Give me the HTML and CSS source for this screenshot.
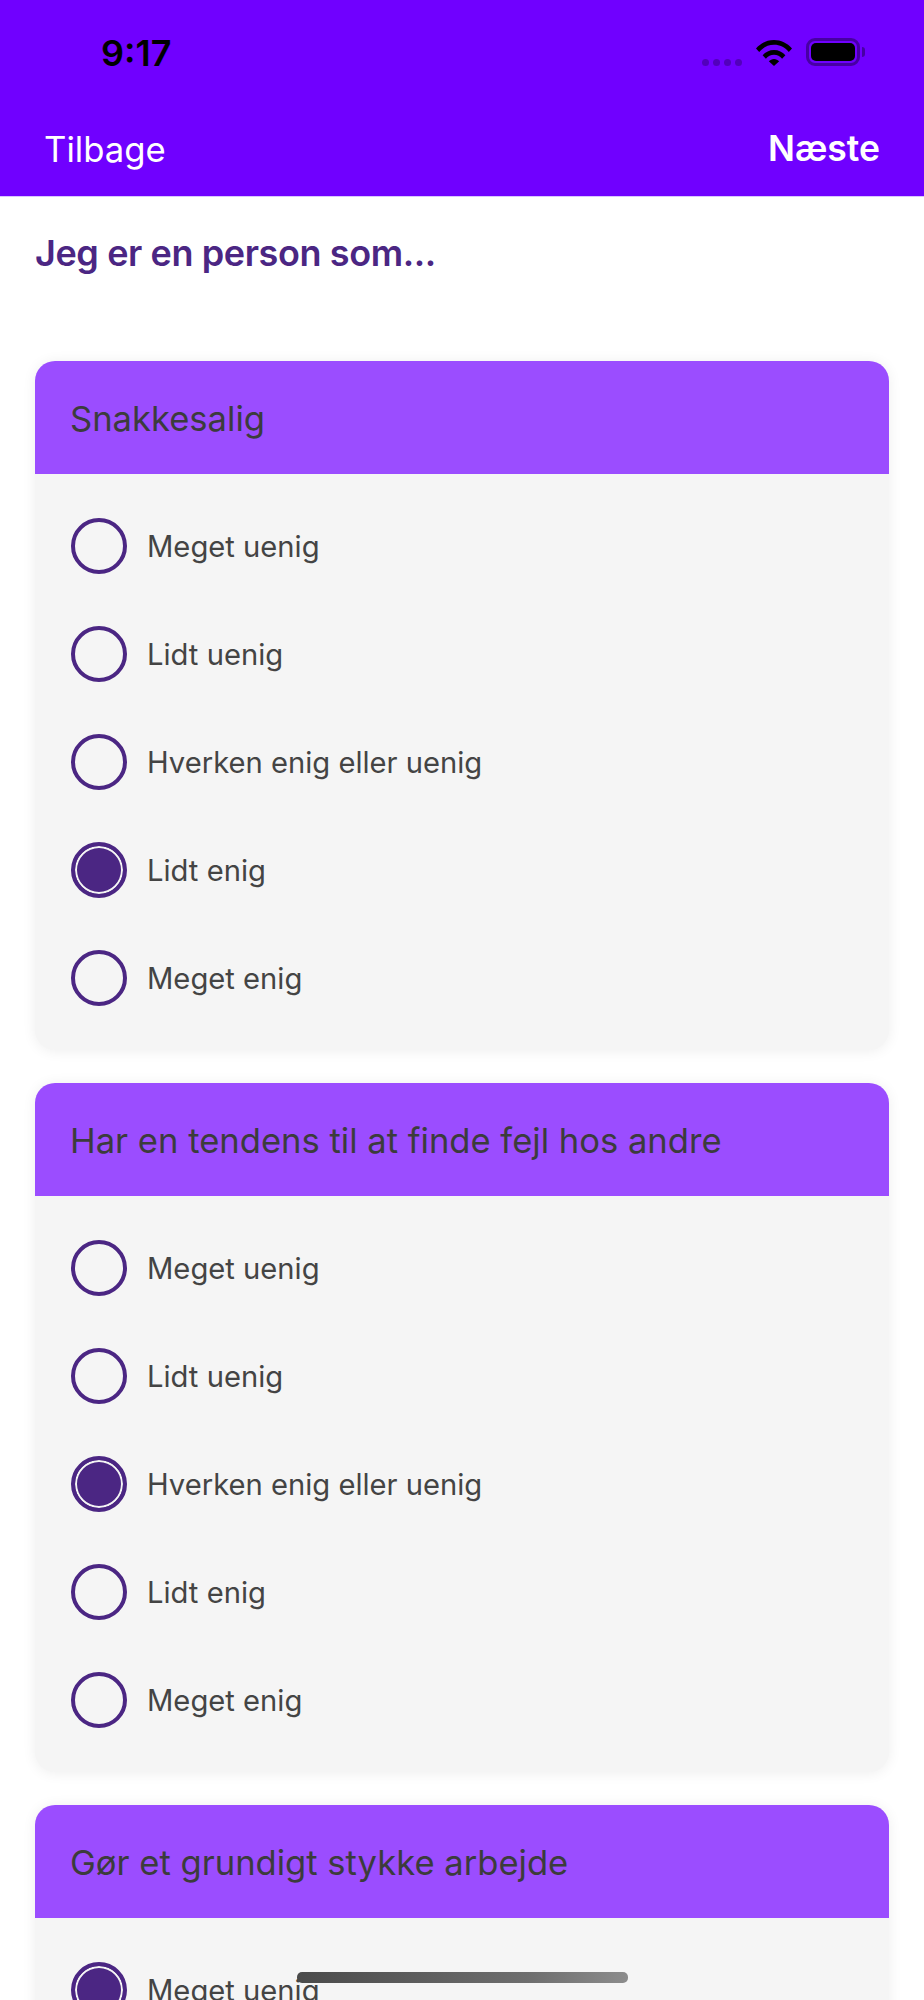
FILE: index.html
```html
<!DOCTYPE html>
<html lang="da">
<head>
	<title>Jeg er en person som...</title>
	<meta charset="utf-8" />
	<meta name="viewport" content="width=device-width, initial-scale=1.0" />
	<link rel="stylesheet" href="styles.css">
</head>
<body>
<div class="screen">
	<header class="topbar">
		<div class="statusbar">
			<span class="time">9:17</span>
			<div class="status-icons">
				<div class="signal"><i></i><i></i><i></i><i></i></div>
				<svg class="wifi" width="36" height="27" viewBox="0 0 36 27">
					<path d="M0 9.5C4.8 4 11 1 18 1s13.200 3 18 8.500l-3.200 3.400C28.800 8.300 23.800 5.800 18 5.800S7.200 8.300 3.200 12.900z" fill="#000"/>
					<path d="M6.600 16.300C9.500 13 13.500 11 18 11s8.500 2 11.400 5.300l-3.300 3.400C24 17.300 21.200 15.800 18 15.800s-6 1.500-8.100 3.900z" fill="#000"/>
					<path d="M12.800 22.300c1.300-1.500 3.100-2.400 5.200-2.400s3.900.9 5.200 2.400L18 27z" fill="#000"/>
				</svg>
				<div class="battery"><div class="battery-level"></div></div>
				<div class="battery-nub"></div>
			</div>
		</div>
		<nav class="navbar">
			<a class="nav-back">Tilbage</a>
			<a class="nav-next">Næste</a>
		</nav>
	</header>

	<section class="content">
		<h1 class="intro">Jeg er en person som...</h1>

		<div class="card">
			<h2 class="card-title">Snakkesalig</h2>
			<ul class="options">
				<li><span class="radio"></span>Meget uenig</li>
				<li><span class="radio"></span>Lidt uenig</li>
				<li><span class="radio"></span>Hverken enig eller uenig</li>
				<li><span class="radio checked"></span>Lidt enig</li>
				<li><span class="radio"></span>Meget enig</li>
			</ul>
		</div>

		<div class="card">
			<h2 class="card-title">Har en tendens til at finde fejl hos andre</h2>
			<ul class="options">
				<li><span class="radio"></span>Meget uenig</li>
				<li><span class="radio"></span>Lidt uenig</li>
				<li><span class="radio checked"></span>Hverken enig eller uenig</li>
				<li><span class="radio"></span>Lidt enig</li>
				<li><span class="radio"></span>Meget enig</li>
			</ul>
		</div>

		<div class="card">
			<h2 class="card-title">Gør et grundigt stykke arbejde</h2>
			<ul class="options">
				<li><span class="radio checked"></span>Meget uenig</li>
				<li><span class="radio"></span>Lidt uenig</li>
				<li><span class="radio"></span>Hverken enig eller uenig</li>
				<li><span class="radio"></span>Lidt enig</li>
				<li><span class="radio"></span>Meget enig</li>
			</ul>
		</div>
	</section>

	<div class="home-indicator"></div>
</div>
</body>
</html>
```

FILE: styles.css
```css
html, body {
	margin: 0;
	padding: 0;
	background: #fff;
}
body {
	font-family: Inter, "Liberation Sans", sans-serif;
}
.screen {
	position: relative;
	width: 924px;
	height: 2000px;
	overflow: hidden;
}

/* top bar */
.topbar {
	height: 197px;
	box-sizing: border-box;
	background-color: #7000ff;
	border-bottom: 1px solid #d9c4ff;
}
.statusbar {
	display: flex;
	justify-content: space-between;
	height: 104px;
	box-sizing: border-box;
	padding: 32px 59px 0 101px;
}
.time {
	font-size: 36px;
	line-height: 42px;
	font-weight: 600;
	color: #000;
}
.status-icons {
	display: flex;
	align-items: flex-start;
	margin-top: 6px;
}
.signal {
	display: flex;
	gap: 4px;
	margin: 21px 14px 0 0;
}
.signal i {
	width: 7px;
	height: 7px;
	border-radius: 50%;
	background-color: #5200bc;
}
.wifi {
	margin: 1px 14px 0 0;
}
.battery {
	width: 54px;
	height: 28px;
	box-sizing: border-box;
	padding: 2px;
	border: 3px solid #4700a3;
	border-radius: 9px;
}
.battery-level {
	height: 100%;
	border-radius: 5px;
	background-color: #000;
}
.battery-nub {
	width: 3px;
	height: 10px;
	margin: 9px 0 0 2px;
	border-radius: 0 3px 3px 0;
	background-color: #4700a3;
}
.navbar {
	display: flex;
	justify-content: space-between;
	padding: 24px 44px 0 44px;
	font-size: 34.7px;
	line-height: 42px;
	color: #fff;
}
.nav-next {
	font-size: 35.500px;
	font-weight: 600;
}

/* questions */
.content {
	padding: 0 35px;
}
.intro {
	margin: 0;
	padding: 35px 0 87px;
	font-size: 36px;
	line-height: 42px;
	font-weight: 600;
	letter-spacing: -0.4px;
	color: #4b2683;
}
.card {
	height: 689px;
	margin-bottom: 33px;
	border-radius: 20px;
	overflow: hidden;
	background-color: #f5f5f5;
	box-shadow: 0 1px 14px rgba(0, 0, 0, 0.07);
}
.card-title {
	margin: 0;
	height: 113px;
	box-sizing: border-box;
	padding: 36px 35px 0;
	font-size: 34.6px;
	line-height: 42px;
	font-weight: 400;
	color: #3c3c3c;
	background-color: #9b4dff;
}
.options {
	list-style: none;
	margin: 0;
	padding: 18px 0 0 36px;
}
.options li {
	display: flex;
	align-items: center;
	gap: 20px;
	height: 108px;
	font-size: 29.2px;
	color: #444;
}
.radio {
	width: 56px;
	height: 56px;
	box-sizing: border-box;
	border: 4px solid #4b2683;
	border-radius: 50%;
}
.radio.checked {
	background-color: #4b2683;
	box-shadow: inset 0 0 0 2px #f5f5f5;
}

.home-indicator {
	position: absolute;
	left: 297px;
	top: 1972px;
	width: 331px;
	height: 11px;
	border-radius: 5px;
	background: linear-gradient(to right, #4a4a4a, #6e6e6e 70%, #8c8c8c);
}
```
